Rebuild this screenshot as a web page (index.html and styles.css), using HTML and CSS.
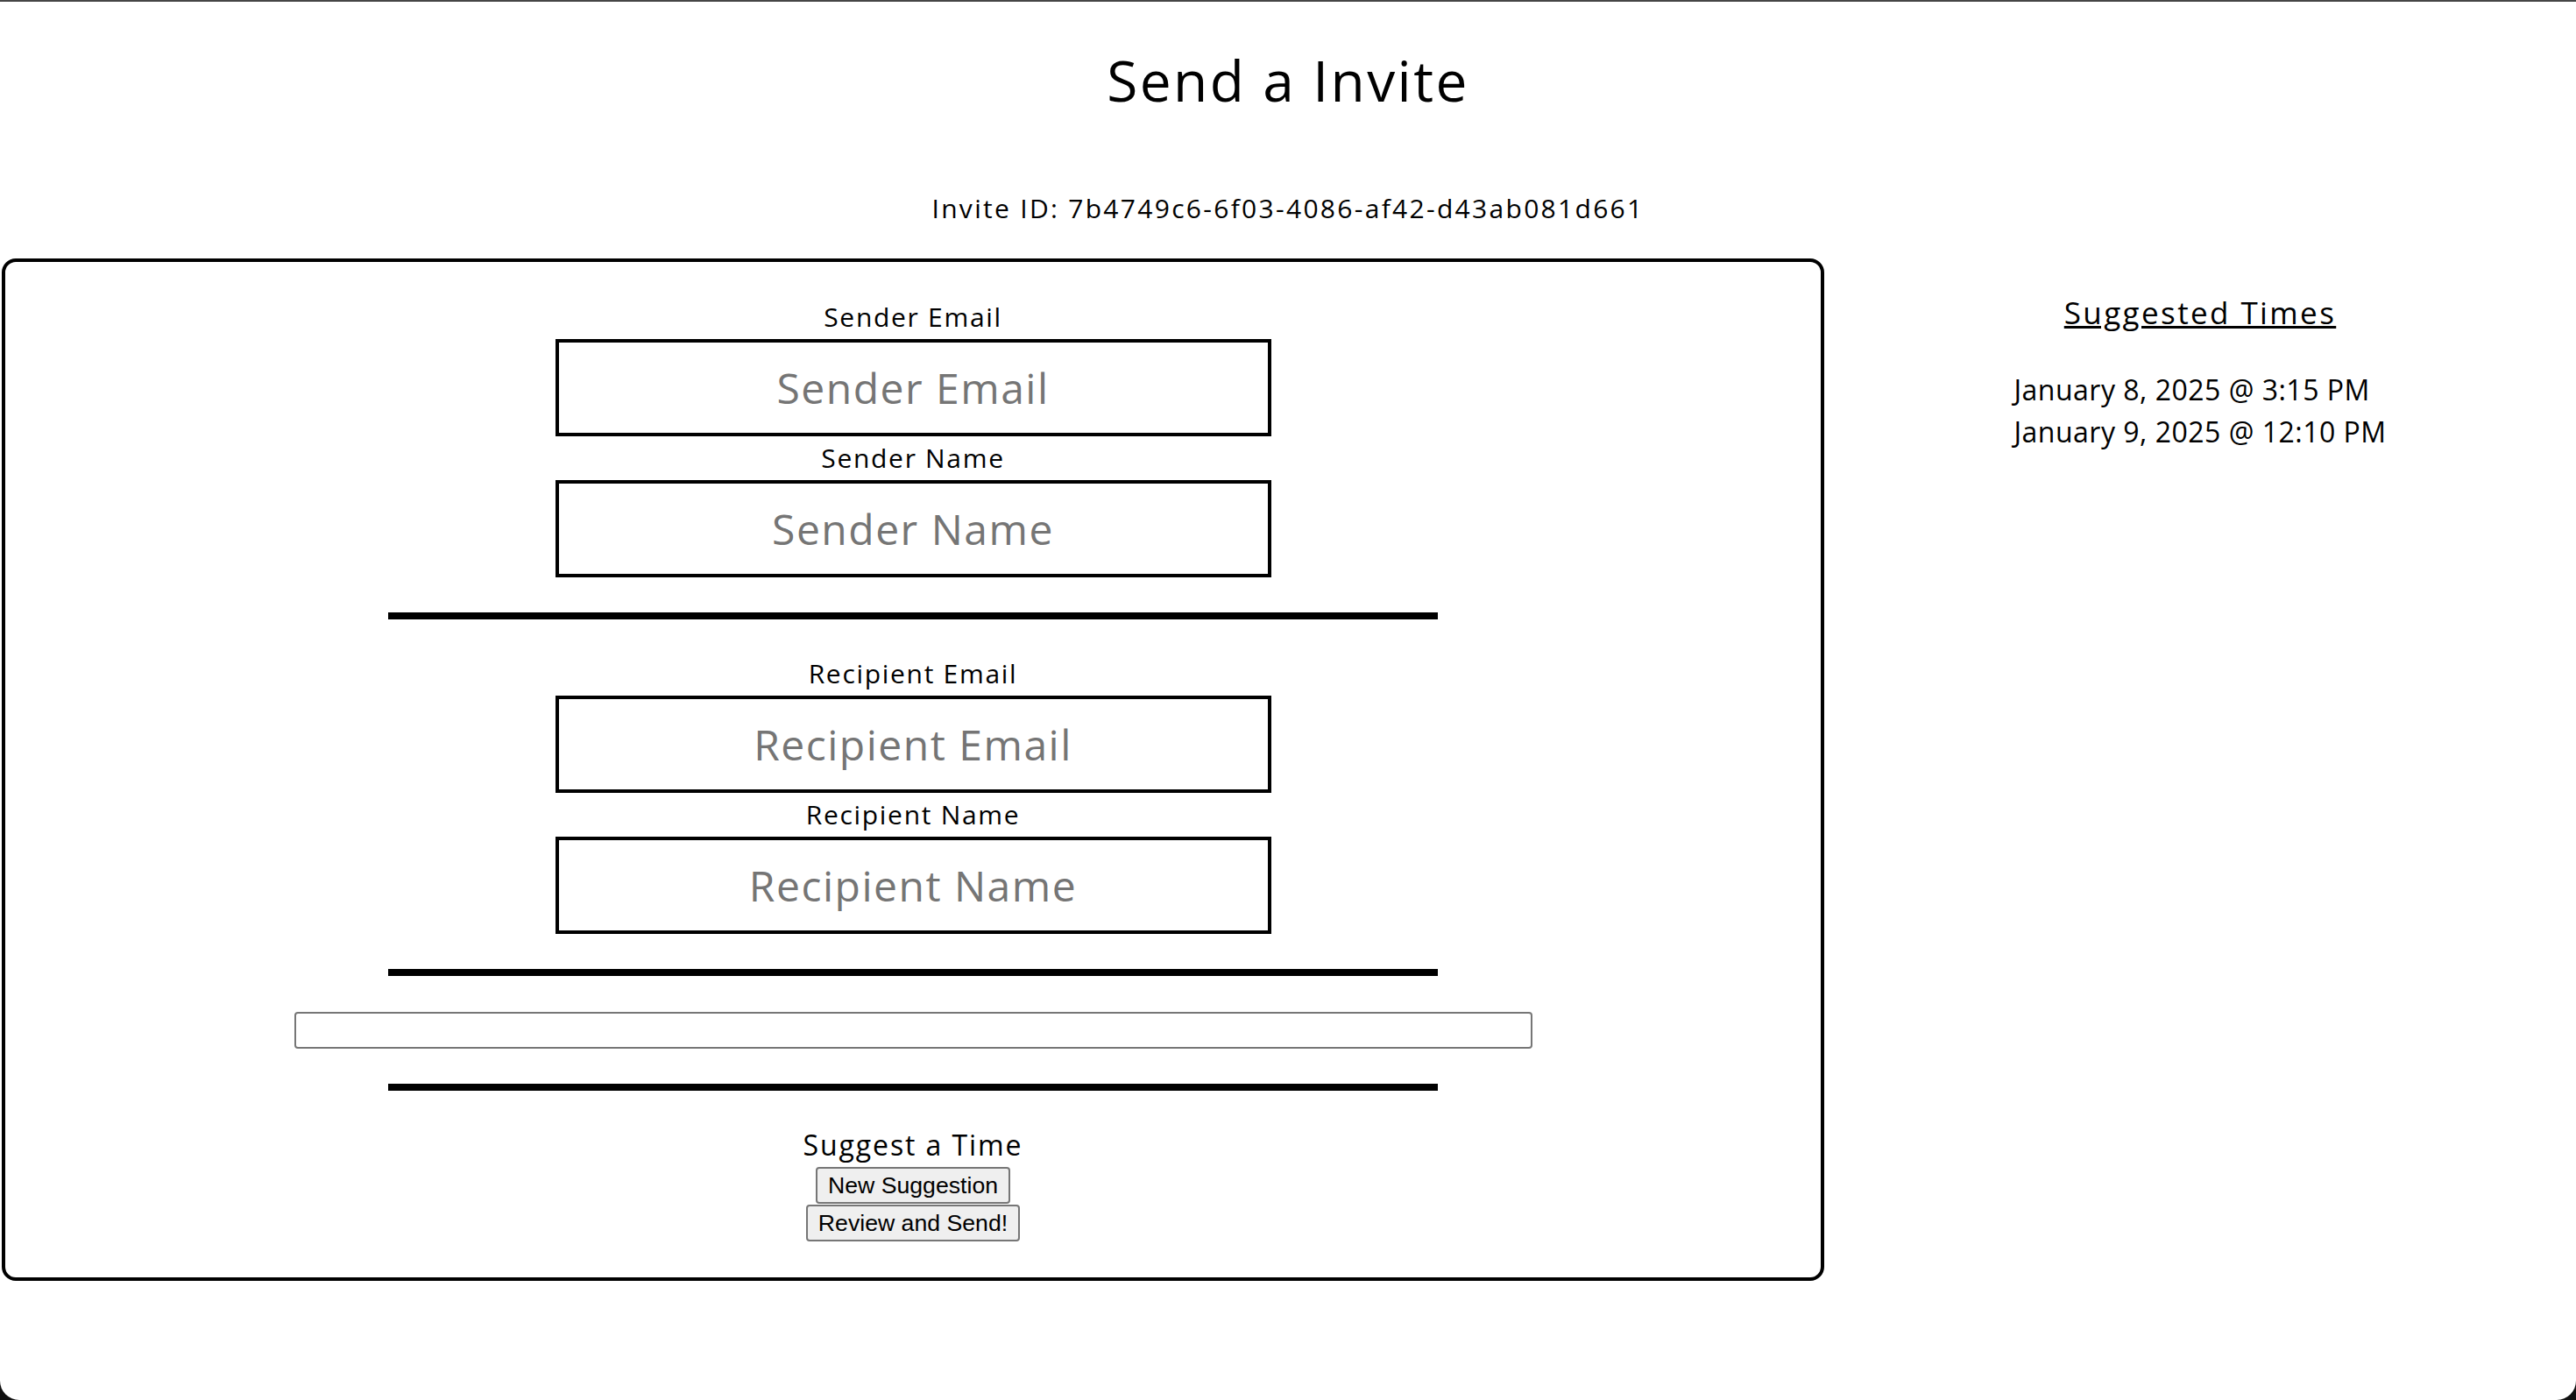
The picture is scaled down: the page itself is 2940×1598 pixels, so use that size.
FILE: index.html
```html
<!DOCTYPE html>
<html lang="en">
<head>
  <meta charset="UTF-8">
  <meta name="viewport" content="width=device-width, initial-scale=1.0">
  <title>Send a Invite</title>
  <link rel="stylesheet" href="styles.css">
</head>
<body>
  <h1 class="page-title">Send a Invite</h1>
  <p class="invite-id">Invite ID: 7b4749c6-6f03-4086-af42-d43ab081d661</p>
  <div class="invite-layout">
    <form class="invite-card" id="inviteForm">
      <label class="field-label" for="senderEmail">Sender Email</label>
      <input class="field-input" type="email" id="senderEmail" placeholder="Sender Email">
      <label class="field-label" for="senderName">Sender Name</label>
      <input class="field-input last" type="text" id="senderName" placeholder="Sender Name">
      <div class="divider"></div>
      <label class="field-label" for="recipientEmail">Recipient Email</label>
      <input class="field-input" type="email" id="recipientEmail" placeholder="Recipient Email">
      <label class="field-label" for="recipientName">Recipient Name</label>
      <input class="field-input last" type="text" id="recipientName" placeholder="Recipient Name">
      <div class="divider"></div>
      <input class="message-input" type="text" id="message">
      <div class="divider"></div>
      <span class="suggest-title">Suggest a Time</span>
      <button type="button" class="plain-btn">New Suggestion</button>
      <button type="submit" class="plain-btn">Review and Send!</button>
    </form>
    <aside class="suggested-times">
      <h3 class="suggested-title">Suggested Times</h3>
      <ul class="time-list">
        <li>January 8, 2025 @ 3:15 PM</li>
        <li>January 9, 2025 @ 12:10 PM</li>
      </ul>
    </aside>
  </div>
</body>
</html>
```

FILE: styles.css
```css
html { background: #111; }
body { margin: 0; min-height: 100vh; box-sizing: border-box; background: #fff; border-top: 2px solid #464646; border-radius: 0 0 22px 22px; font-family: "Open Sans", sans-serif; color: #000; }
.page-title { margin: 42px 0 0; font-size: 64px; line-height: 96px; font-weight: 500; letter-spacing: 2.4px; text-align: center; }
.invite-id { margin: 77px 0 0; font-size: 30px; line-height: 42px; letter-spacing: 2.3px; text-align: center; }
.invite-layout { display: flex; align-items: flex-start; margin-top: 36px; padding-left: 2px; }
.invite-card { width: 2080px; flex-shrink: 0; box-sizing: border-box; border: 4px solid #000; border-radius: 16px; padding: 42px 0 41px; display: flex; flex-direction: column; align-items: center; }
.field-label { font-size: 30px; line-height: 42px; font-weight: 500; letter-spacing: 1.7px; margin-bottom: 4px; }
.field-input { width: 817px; height: 111px; box-sizing: border-box; border: 4px solid #000; padding: 0; margin: 0 0 4px; font-family: inherit; font-size: 48px; letter-spacing: 1.5px; text-align: center; color: #000; }
.field-input::placeholder { color: #757575; }
.field-input.last { margin-bottom: 0; }
.divider { width: 1198px; height: 8px; background: #000; margin: 40px 0 41px; }
.message-input { width: 1413px; height: 42px; box-sizing: border-box; border: 2px solid #767676; border-radius: 4px; padding: 2px 4px; margin: 0; }
.suggest-title { font-size: 32px; line-height: 48px; letter-spacing: 1.9px; margin-top: -3px; }
.plain-btn { height: 42px; margin: 1px 0 0; padding: 2px 12px; font-family: "Liberation Sans", Arial, sans-serif; font-size: 26.67px; color: #000; background: #efefef; border: 2px solid #767676; border-radius: 4px; }
.suggested-times { flex: 1; text-align: center; padding-top: 36px; }
.suggested-title { margin: 0; font-size: 35px; line-height: 52px; font-weight: 400; letter-spacing: 2.4px; text-decoration: underline; }
.time-list { display: inline-block; margin: 38px 0 0; padding: 0; list-style: none; text-align: left; font-size: 32px; line-height: 48px; letter-spacing: 0.5px; }
```
